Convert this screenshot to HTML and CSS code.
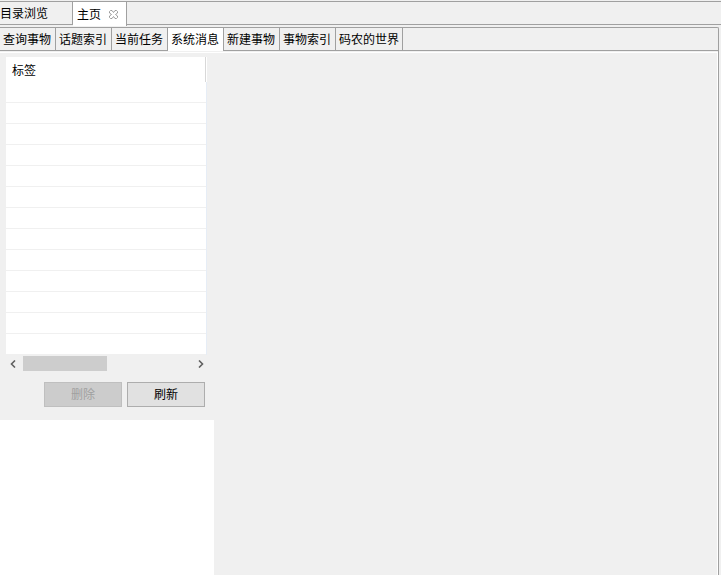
FILE: index.html
```html
<!DOCTYPE html>
<html>
<head>
<meta charset="utf-8">
<link rel="stylesheet" href="styles.css">
</head>
<body>
<div class="app">
  <div class="topbar">
    <div class="ttab">目录浏览</div>
    <div class="ttab active">主页<span class="close"><svg width="9" height="9" viewBox="0 0 9 9"><path d="M1.5 0.5h1.5l1.5 2l1.5-2h1.5l1 1v1.5l-2 1.5l2 1.5v1.5l-1 1h-1.5l-1.5-2l-1.5 2h-1.5l-1-1v-1.5l2-1.5l-2-1.5v-1.5z" fill="none" stroke="#9a9a9a" stroke-width="1"/></svg></span></div>
  </div>
  <div class="pane">
    <div class="tabs">
      <div class="tab">查询事物</div>
      <div class="tab">话题索引</div>
      <div class="tab">当前任务</div>
      <div class="tab active">系统消息</div>
      <div class="tab">新建事物</div>
      <div class="tab">事物索引</div>
      <div class="tab">码农的世界</div>
    </div>
    <div class="content">
      <div class="left">
        <div class="panel">
          <div class="table">
            <div class="thead"><span>标签</span></div>
            <div class="tbody">
              <div class="row"></div><div class="row"></div><div class="row"></div><div class="row"></div>
              <div class="row"></div><div class="row"></div><div class="row"></div><div class="row"></div>
              <div class="row"></div><div class="row"></div><div class="row"></div><div class="row"></div>
              <div class="row"></div>
            </div>
          </div>
          <div class="hscroll">
            <svg class="arr" width="7" height="8" viewBox="0 0 7 8"><path d="M5 0.5L1.5 4L5 7.5" fill="none" stroke="#606060" stroke-width="1.6"/></svg>
            <div class="track"><div class="thumb"></div></div>
            <svg class="arr" width="7" height="8" viewBox="0 0 7 8"><path d="M2 0.5L5.5 4L2 7.5" fill="none" stroke="#606060" stroke-width="1.6"/></svg>
          </div>
          <div class="buttons">
            <div class="btn disabled">删除</div>
            <div class="btn">刷新</div>
          </div>
        </div>
      </div>
      <div class="right"></div>
    </div>
  </div>
</div>
</body>
</html>
```
FILE: styles.css
```css
* { box-sizing: border-box; }
html, body { margin: 0; padding: 0; }
body {
  width: 721px; height: 575px; overflow: hidden;
  background: #f0f0f0;
  font-family: "Noto Sans CJK SC", "Microsoft YaHei", sans-serif;
  font-size: 12px; color: #000;
}
.app { display: flex; flex-direction: column; height: 575px; }
.topbar {
  margin-top: 1px;
  height: 24px;
  border-top: 1px solid #a0a0a0;
  border-bottom: 1px solid #a0a0a0;
  display: flex; align-items: stretch;
  width: 721px;
}
.ttab {
  width: 73px; height: 23px; line-height: 22px;
  padding-left: 0;
  border-right: 1px solid #a0a0a0;
}
.ttab.active {
  width: 54px; padding-left: 4px;
  background: #fff;
  height: 25px; margin-top: -1px;
  border-top: 1px solid #a0a0a0;
  border-right: 1px solid #a0a0a0;
  display: flex; align-items: center;
  line-height: 22px;
}
.close { margin-left: 8px; display: flex; align-items: center; }
.pane {
  margin-top: 2px;
  width: 719px;
  flex: 1;
  display: flex; flex-direction: column;
  border-right: 1px solid #a0a0a0;
  border-top: 1px solid #a0a0a0;
  border-top-right-radius: 2px;
}
.tabs {
  height: 23px;
  display: flex;
  border-bottom: 1px solid #a0a0a0;
}
.tab {
  padding: 0 4px 0 3px;
  border-right: 1px solid #a0a0a0;
  line-height: 21px;
  height: 22px;
  white-space: nowrap;
}
.tab:last-child { padding-right: 3px; }
.tab.active { background: #fff; height: 23px; }
.content {
  flex: 1; display: flex;
  margin-top: 1px;
  border-top: 1px solid #fff;
}
.left { width: 214px; display: flex; flex-direction: column; background: #fff; }
.panel {
  height: 367px;
  background: #f0f0f0;
  padding: 4px 0 0 6px;
  display: flex; flex-direction: column;
}
.table { width: 201px; height: 298px; background: #fff; display: flex; flex-direction: column; }
.thead {
  height: 25px;
  padding: 5px 0 0 6px;
  line-height: 16px;
  border-right: 1px solid #d8d8d8;
  margin-right: 1px;
}
.tbody { border-right: 1px solid #e6edf6; flex: 1; overflow: hidden; }
.row { height: 21px; border-bottom: 1px solid #f0f0f0; }
.hscroll {
  width: 200px; height: 17px;
  display: flex; align-items: center;
  padding: 0 2px 0 4px;
}
.track { flex: 1; height: 15px; padding: 0 4px 0 6px; }
.thumb { width: 84px; height: 15px; background: #cdcdcd; }
.arr { flex: none; }
.buttons { display: flex; gap: 5px; margin: 10px 0 0 38px; }
.btn {
  width: 78px; height: 25px;
  border: 1px solid #adadad;
  background: #e1e1e1;
  text-align: center; line-height: 22px;
}
.btn.disabled { background: #cccccc; border-color: #bfbfbf; color: #a0a0a0; }
.right {
  flex: 1;
  background: #f0f0f0;
  border-right: 1px solid #fff;
}
```
